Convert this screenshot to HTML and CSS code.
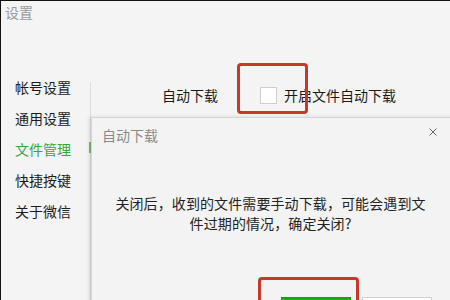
FILE: index.html
```html
<!DOCTYPE html>
<html lang="zh">
<head>
<meta charset="utf-8">
<link rel="stylesheet" href="styles.css">
</head>
<body>
<div class="window">
  <div class="titlebar">设置</div>
  <div class="main">
    <nav class="sidebar">
      <div class="nav-item">帐号设置</div>
      <div class="nav-item">通用设置</div>
      <div class="nav-item active">文件管理</div>
      <div class="nav-item">快捷按键</div>
      <div class="nav-item">关于微信</div>
    </nav>
    <div class="divider"><span class="marker"></span></div>
    <section class="content">
      <div class="row">
        <span class="row-label">自动下载</span>
        <span class="checkbox"></span>
        <span class="check-text">开启文件自动下载</span>
      </div>
    </section>
  </div>

  <div class="dialog">
    <div class="dialog-head">
      <span class="dialog-title">自动下载</span>
      <svg class="close" width="8" height="8" viewBox="0 0 8 8"><path d="M0.5 0.5L7.5 7.5M7.5 0.5L0.5 7.5" stroke="#666" stroke-width="1"/></svg>
    </div>
    <p class="dialog-msg">关闭后，收到的文件需要手动下载，可能会遇到文<br>件过期的情况，确定关闭?</p>
    <div class="dialog-foot">
      <button class="btn btn-ok" aria-label="关闭"></button>
      <button class="btn btn-cancel" aria-label="取消"></button>
    </div>
  </div>

  <div class="mark mark-check"></div>
  <div class="mark mark-btn"></div>
</div>
</body>
</html>
```

FILE: styles.css
```css
* { box-sizing: border-box; }
html, body { margin: 0; padding: 0; background: #f4f4f4; }
body { font-family: "Noto Sans CJK SC", "Noto Sans", sans-serif; }

.window {
  position: relative;
  width: 450px;
  height: 300px;
  background: #f4f4f4;
  border-top: 1px solid #111;
  border-left: 1px solid #111;
  overflow: hidden;
  color: #1a1a1a;
}

.titlebar {
  padding: 2px 0 0 4px;
  height: 22px;
  font-size: 14px;
  line-height: 18px;
  color: #9a9a9a;
}

.main { display: flex; }

.sidebar {
  width: 89px;
  padding-top: 49px;
}
.nav-item {
  height: 31px;
  line-height: 31px;
  padding-left: 14px;
  font-size: 14px;
  color: #1c1c1c;
}
.nav-item.active { color: #3aa43f; }

.divider {
  position: relative;
  width: 1px;
  margin-top: 59px;
  height: 230px;
  background: #dedede;
}
.marker {
  position: absolute;
  left: -1px;
  top: 60px;
  width: 2px;
  height: 11px;
  background: #6fc06f;
}

.content { flex: 1; padding-top: 60px; }
.row {
  display: flex;
  align-items: center;
  height: 24px;
  font-size: 14px;
}
.row-label { margin-left: 71px; }
.checkbox {
  width: 17px;
  height: 17px;
  margin-left: 42px;
  background: #fff;
  border: 1px solid #cfcfcf;
}
.check-text { margin-left: 7px; }

.dialog {
  position: absolute;
  left: 90px;
  top: 116px;
  width: 380px;
  height: 220px;
  background: #f3f3f3;
  border: 1px solid #d6d6d6;
  box-shadow: -2px 0 4px rgba(0, 0, 0, 0.12);
}
.dialog-head {
  display: flex;
  justify-content: space-between;
  align-items: center;
  height: 34px;
  padding: 0 0 0 10px;
  width: 359px;
}
.dialog-title { font-size: 14px; color: #8a8a8a; }
.close { margin-right: 14px; margin-top: -7px; }

.dialog-msg {
  width: 359px;
  margin: 41px 0 0;
  padding: 0 6px 0 4px;
  font-size: 14px;
  letter-spacing: 0.1px;
  line-height: 20px;
  text-align: center;
  white-space: nowrap;
  color: #222;
}

.dialog-foot {
  display: flex;
  gap: 11px;
  width: 359px;
  padding-left: 189px;
  margin-top: 64px;
}
.btn {
  width: 70px;
  height: 28px;
  font-family: inherit;
  font-size: 14px;
  border-radius: 0;
}
.btn-ok { background: #1aad19; border: 1px solid #179b16; color: #fff; }
.btn-cancel { background: #fff; border: 1px solid #d0d0d0; color: #333; }

.mark {
  position: absolute;
  border: 3px solid #c8372c;
  border-radius: 4px;
}
.mark-check { left: 236px; top: 62px; width: 71px; height: 51px; }
.mark-btn { left: 257px; top: 276px; width: 101px; height: 40px; }
```
